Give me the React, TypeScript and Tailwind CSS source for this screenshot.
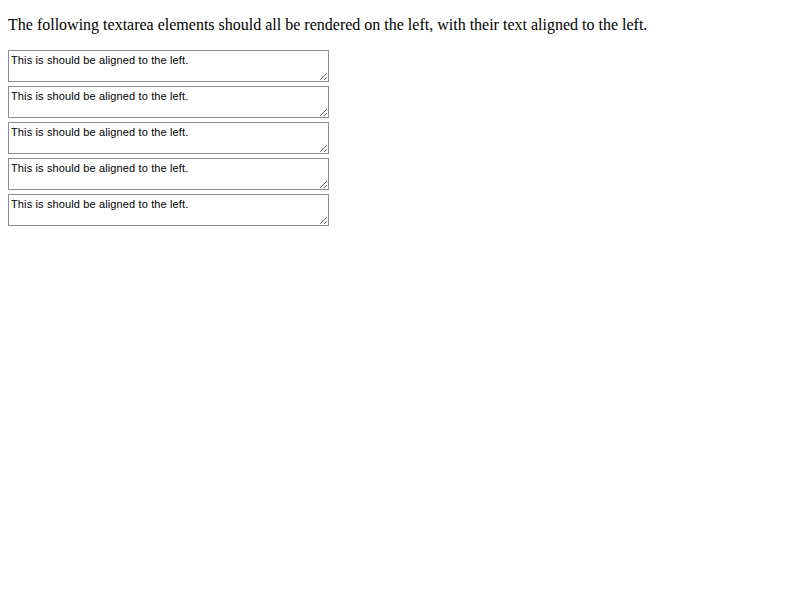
export default function App() {
  const rows = [0, 1, 2, 3, 4];

  return (
    <div className="bg-white min-h-[600px] p-2 font-['Liberation_Serif',serif] text-black">
      <p className="my-2 text-base leading-[18px]">
        The following textarea elements should all be rendered on the left, with their text aligned to the left.
      </p>

      <div className="flex flex-col items-start gap-1 mt-4">
        {rows.map((i) => (
          <textarea
            key={i}
            readOnly
            defaultValue="This is should be aligned to the left."
            className="block w-[321px] h-[32px] border border-[#8c8c8c] px-[2px] pt-[3px] pb-[1px] text-left text-[11px] leading-[13px] tracking-[0.13px] font-['Liberation_Sans',Arial,sans-serif] text-black resize bg-white outline-none"
          />
        ))}
      </div>
    </div>
  );
}
